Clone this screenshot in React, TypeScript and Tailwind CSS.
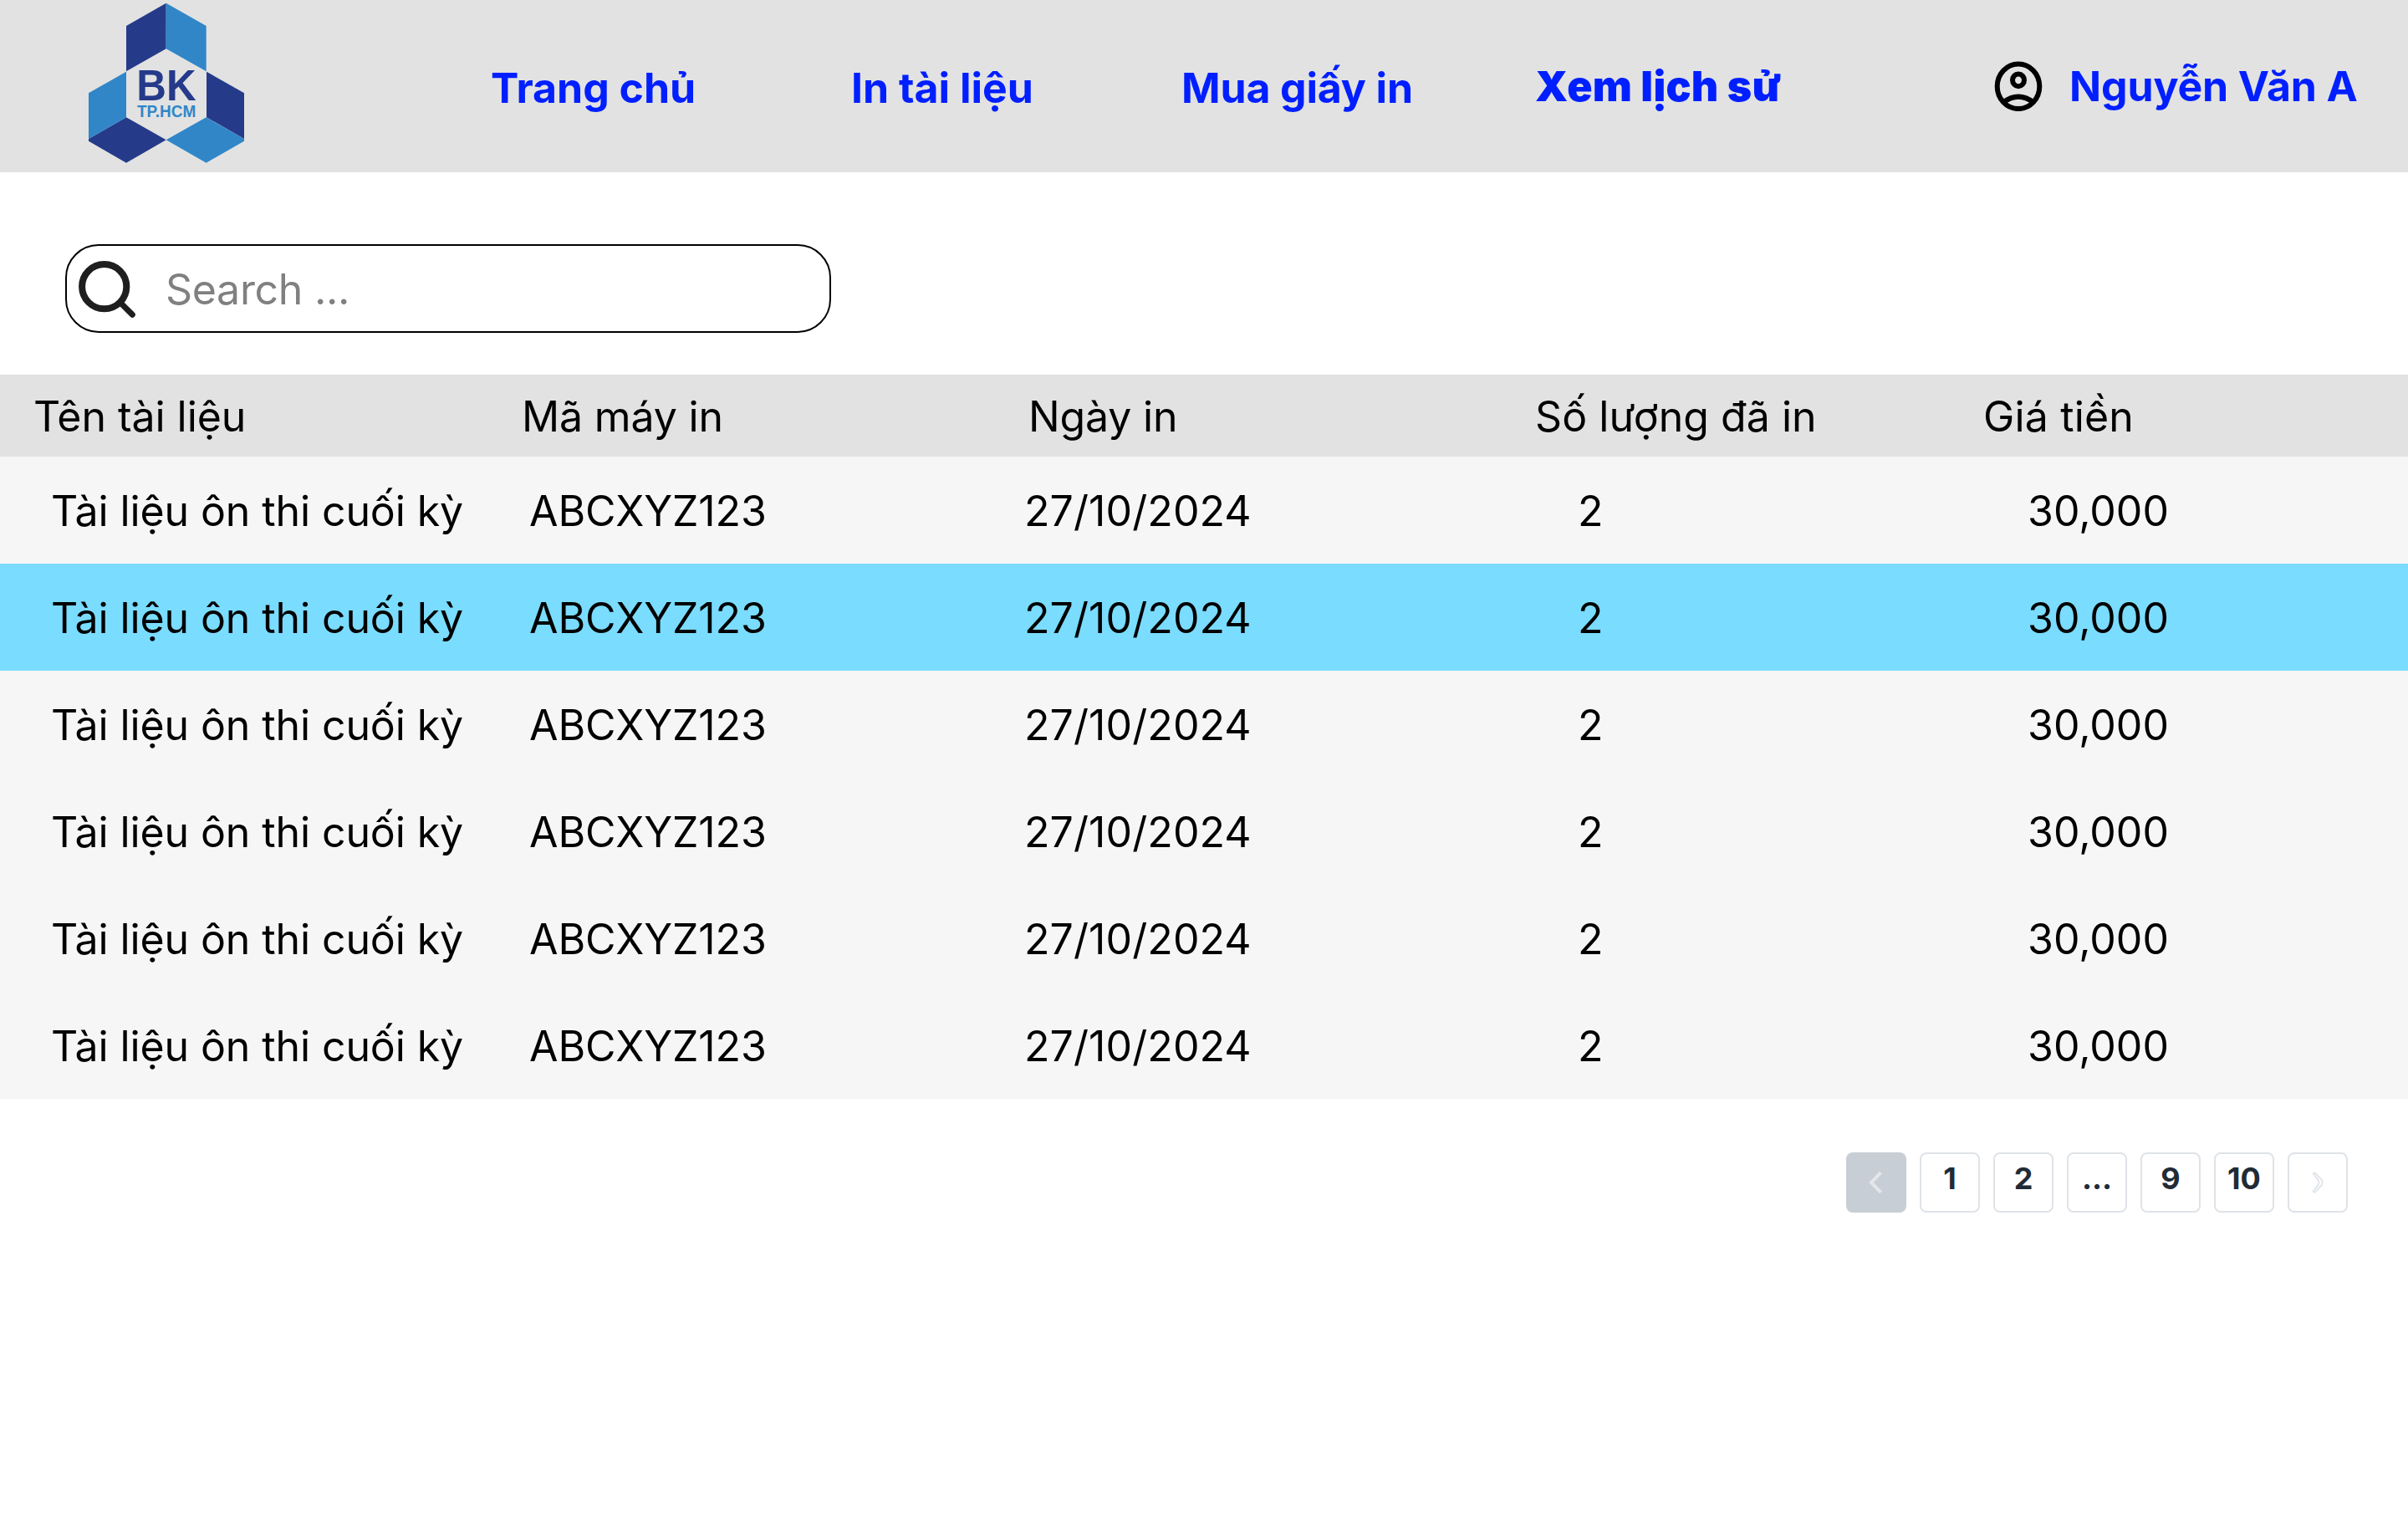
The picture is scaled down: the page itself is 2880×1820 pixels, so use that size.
import React from "react";

const nav = [
  { label: "Trang chủ", cls: "ml-[587px] w-[431px] font-bold pt-1 tracking-[-0.05px]" },
  { label: "In tài liệu", cls: "w-[395px] font-bold pt-1" },
  { label: "Mua giấy in", cls: "w-[423px] font-bold pt-1 tracking-[-0.15px]" },
  { label: "Xem lịch sử", cls: "w-[549px] font-black pt-[2px] tracking-[0.25px]" },
];

const rows = Array.from({ length: 6 }, (_, i) => ({
  name: "Tài liệu ôn thi cuối kỳ",
  machine: "ABCXYZ123",
  date: "27/10/2024",
  qty: "2",
  price: "30,000",
  active: i === 1,
}));

const Logo = () => (
  <svg className="h-[206px] w-[220px] shrink-0" viewBox="0 0 660 618">
    <g fill="#263a8a">
      <path d="M326 11V175L183 256V93z" />
      <path d="M471 257L606 334V498L471 421z" />
      <path d="M183 421L326 502L183 584L48 506V498z" />
    </g>
    <g fill="#3186c8">
      <path d="M326 11L470 93V256L326 175z" />
      <path d="M183 257V421L48 498V334z" />
      <path d="M470 421L606 498V506L470 584L326 502z" />
    </g>
    <g fontFamily="Liberation Sans" fontWeight="700">
      <text x="220" y="361" fontSize="154" textLength="214" lengthAdjust="spacingAndGlyphs" fill="#263a8a">BK</text>
      <text x="222" y="420" fontSize="59" textLength="211" lengthAdjust="spacingAndGlyphs" fill="#3186c8">TP.HCM</text>
    </g>
  </svg>
);

const pages = ["1", "2", "...", "9", "10"];

export default function App() {
  return (
    <div className="h-[1820px] w-[2880px] overflow-hidden bg-white font-['Inter',sans-serif] text-[50px] leading-[60px] text-black">
      <header className="flex h-[206px] items-center bg-[#e2e2e2] whitespace-nowrap text-[#001fff]">
        <div className="flex w-0 pl-[90px]">
          <Logo />
        </div>
        <nav className="-ml-[90px] flex">
          {nav.map((n) => (
            <a key={n.label} className={n.cls}>
              {n.label}
            </a>
          ))}
        </nav>
        <div className="flex items-center font-bold tracking-[-0.15px]">
          <svg className="mr-[32px] h-[60px] w-[58px]" viewBox="0 0 58 60" fill="none" stroke="#000" strokeWidth="6">
            <ellipse cx="29" cy="30.3" rx="25.3" ry="26.8" />
            <ellipse cx="29" cy="22.8" rx="7" ry="7.4" />
            <path d="M11 49.3Q29 35.8 47 49.3" />
          </svg>
          Nguyễn Văn A
        </div>
      </header>

      <div className="mt-[86px] ml-[78px] flex h-[106px] w-[916px] items-center rounded-[40px] border-2 border-black">
        <svg className="ml-[12px] h-[72px] w-[72px]" viewBox="0 0 72 72" fill="none" stroke="#1e1e1e" strokeWidth="8">
          <circle cx="32.7" cy="33.7" r="26.6" />
          <path d="M52 53L66.3 67.3" strokeWidth="7" strokeLinecap="round" />
        </svg>
        <span className="ml-[34px] pt-[2px] tracking-[-0.3px] text-[#808080]">Search ...</span>
      </div>

      <div className="mt-[50px] whitespace-nowrap">
        <div className="flex h-[98px] items-center bg-[#e2e2e2] pt-px pl-[40px]">
          <div className="w-[584px] tracking-[-0.05px]">Tên tài liệu</div>
          <div className="w-[606px] tracking-[-0.15px]">Mã máy in</div>
          <div className="w-[606px] tracking-[-0.15px]">Ngày in</div>
          <div className="w-[536px] tracking-[0.05px]">Số lượng đã in</div>
          <div className="tracking-[0.15px]">Giá tiền</div>
        </div>
        {rows.map((r, i) => (
          <div
            key={i}
            className={`flex h-[128px] items-center pt-px pl-[61px] ${r.active ? "bg-[#7adcff]" : "bg-[#f6f6f6]"}`}
          >
            <div className="w-[572px] tracking-[-0.1px]">{r.name}</div>
            <div className="w-[592px] tracking-[-0.1px]">{r.machine}</div>
            <div className="w-[662px] tracking-[0.1px]">{r.date}</div>
            <div className="w-[538px]">{r.qty}</div>
            <div>{r.price}</div>
          </div>
        ))}
      </div>

      <div className="mt-[64px] mr-[72px] flex justify-end gap-[16px] text-[36px] font-bold text-[#212b36]">
        <div className="flex size-[72px] items-center justify-center rounded-[8px] bg-[#c8ced5]">
          <svg className="size-[32px]" viewBox="0 0 32 32" fill="none" stroke="#e3e7ea" strokeWidth="4">
            <path d="M21.5 4.2L10 16L21.5 27.8" />
          </svg>
        </div>
        {pages.map((p) => (
          <div key={p} className="flex size-[72px] items-center justify-center rounded-[8px] border-2 border-[#dfe3e8] pb-[10px]">
            {p}
          </div>
        ))}
        <div className="flex size-[72px] items-center justify-center rounded-[8px] border-2 border-[#dfe3e8]">
          <svg
            className="size-[32px]"
            viewBox="0 0 32 32"
            fill="none"
            stroke="#dfe3e8"
            strokeWidth="1.8"
            strokeLinejoin="round"
          >
            <path d="M12.8 4.4L20.2 12.3Q23 16 20.2 19.7L12.8 27.6Q11 28 10.8 26.2L16.2 19.4Q18.6 16 16.2 12.6L10.8 5.8Q11 4 12.8 4.4z" />
          </svg>
        </div>
      </div>
    </div>
  );
}
